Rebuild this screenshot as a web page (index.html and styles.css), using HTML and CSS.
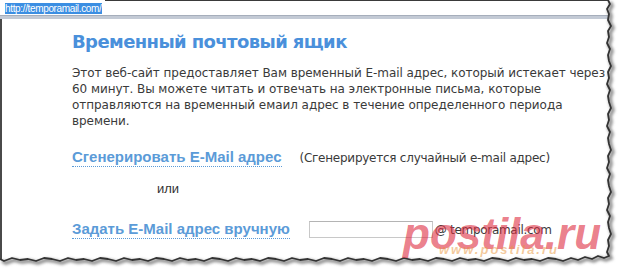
FILE: index.html
```html
<!DOCTYPE html>
<html lang="ru">
<head>
<meta charset="utf-8">
<title>temporamail.com</title>
<link rel="stylesheet" href="styles.css">
</head>
<body>
<div class="shot">
  <div class="urlbar"><span class="sel">http://temporamail.com/</span><span class="url-rest"></span></div>
  <div class="bar"></div>
  <div class="page">
    <h1 class="title">Временный почтовый ящик</h1>
    <p class="intro">Этот веб-сайт предоставляет Вам временный E-mail адрес, который истекает через<br>60 минут. Вы можете читать и отвечать на электронные письма, которые<br>отправляются на временный емаил адрес в течение определенного периода<br>времени.</p>
    <div class="row row-gen"><a class="act">Сгенерировать E-Mail адрес</a><span class="hint">(Сгенерируется случайный e-mail адрес)</span></div>
    <div class="or">или</div>
    <div class="row row-set"><a class="act">Задать E-Mail адрес вручную</a><span class="field"></span><span class="domain">@ temporamail.com</span></div>
  </div>
</div>
<svg class="torn" viewBox="0 0 620 273" width="620" height="273">
  <defs>
    <filter id="blur" x="-10%" y="-10%" width="120%" height="120%"><feGaussianBlur stdDeviation="1.4"/></filter>
  </defs>
  <path fill="#fff" d="M608,0 L610,4 L607,9 L609,14 L608,20 L611,26 L608,31 L609,37 L607,43 L610,49 L608,55 L609,61 L611,66 L608,72 L609,78 L607,84 L610,90 L608,96 L609,102 L611,108 L608,114 L609,120 L607,126 L610,132 L608,138 L609,144 L611,150 L608,156 L609,162 L607,168 L610,174 L608,180 L609,186 L611,192 L608,198 L609,204 L607,210 L610,216 L608,222 L609,228 L611,234 L608,240 L609,246 L607,252 L609,256 L604,258 L598,256 L592,259 L585,257 L578,260 L571,258 L563,261 L556,259 L548,258 L540,261 L532,259 L524,260 L516,258 L508,261 L500,259 L492,258 L484,261 L476,259 L468,260 L460,258 L452,261 L444,259 L436,258 L428,261 L420,259 L412,260 L404,258 L396,261 L388,259 L380,258 L372,261 L364,259 L356,260 L348,258 L340,261 L332,259 L324,258 L316,261 L308,259 L300,260 L292,258 L284,261 L276,259 L268,258 L260,261 L252,259 L244,260 L236,258 L228,261 L220,259 L212,258 L204,261 L196,259 L188,260 L180,258 L172,261 L164,259 L156,258 L148,261 L140,259 L132,260 L124,258 L116,261 L108,259 L100,258 L92,261 L84,259 L76,260 L68,258 L60,261 L52,259 L44,258 L36,261 L28,259 L20,260 L12,258 L4,261 L0,259 L0,273 L620,273 L620,0 Z"/>
  <path class="edge-shadow" filter="url(#blur)" transform="translate(2,2)" d="M608,0 L610,4 L607,9 L609,14 L608,20 L611,26 L608,31 L609,37 L607,43 L610,49 L608,55 L609,61 L611,66 L608,72 L609,78 L607,84 L610,90 L608,96 L609,102 L611,108 L608,114 L609,120 L607,126 L610,132 L608,138 L609,144 L611,150 L608,156 L609,162 L607,168 L610,174 L608,180 L609,186 L611,192 L608,198 L609,204 L607,210 L610,216 L608,222 L609,228 L611,234 L608,240 L609,246 L607,252 L609,256 L604,258 L598,256 L592,259 L585,257 L578,260 L571,258 L563,261 L556,259 L548,258 L540,261 L532,259 L524,260 L516,258 L508,261 L500,259 L492,258 L484,261 L476,259 L468,260 L460,258 L452,261 L444,259 L436,258 L428,261 L420,259 L412,260 L404,258 L396,261 L388,259 L380,258 L372,261 L364,259 L356,260 L348,258 L340,261 L332,259 L324,258 L316,261 L308,259 L300,260 L292,258 L284,261 L276,259 L268,258 L260,261 L252,259 L244,260 L236,258 L228,261 L220,259 L212,258 L204,261 L196,259 L188,260 L180,258 L172,261 L164,259 L156,258 L148,261 L140,259 L132,260 L124,258 L116,261 L108,259 L100,258 L92,261 L84,259 L76,260 L68,258 L60,261 L52,259 L44,258 L36,261 L28,259 L20,260 L12,258 L4,261 L0,259"/>
  <path class="edge" d="M608,0 L610,4 L607,9 L609,14 L608,20 L611,26 L608,31 L609,37 L607,43 L610,49 L608,55 L609,61 L611,66 L608,72 L609,78 L607,84 L610,90 L608,96 L609,102 L611,108 L608,114 L609,120 L607,126 L610,132 L608,138 L609,144 L611,150 L608,156 L609,162 L607,168 L610,174 L608,180 L609,186 L611,192 L608,198 L609,204 L607,210 L610,216 L608,222 L609,228 L611,234 L608,240 L609,246 L607,252 L609,256 L604,258 L598,256 L592,259 L585,257 L578,260 L571,258 L563,261 L556,259 L548,258 L540,261 L532,259 L524,260 L516,258 L508,261 L500,259 L492,258 L484,261 L476,259 L468,260 L460,258 L452,261 L444,259 L436,258 L428,261 L420,259 L412,260 L404,258 L396,261 L388,259 L380,258 L372,261 L364,259 L356,260 L348,258 L340,261 L332,259 L324,258 L316,261 L308,259 L300,260 L292,258 L284,261 L276,259 L268,258 L260,261 L252,259 L244,260 L236,258 L228,261 L220,259 L212,258 L204,261 L196,259 L188,260 L180,258 L172,261 L164,259 L156,258 L148,261 L140,259 L132,260 L124,258 L116,261 L108,259 L100,258 L92,261 L84,259 L76,260 L68,258 L60,261 L52,259 L44,258 L36,261 L28,259 L20,260 L12,258 L4,261 L0,259"/>
</svg>
<div class="wm"><span class="wm-sub">www.postila.ru</span><span class="wm-main">postila.ru</span></div>
</body>
</html>
```
FILE: styles.css
```css
html, body {
  margin: 0;
  padding: 0;
  background: #fff;
}
body {
  width: 620px;
  height: 273px;
  overflow: hidden;
  position: relative;
  font-family: "DejaVu Sans", Verdana, sans-serif;
  color: #3a3a3a;
}
.shot {
  display: flex;
  flex-direction: column;
  height: 273px;
}
.urlbar {
  display: flex;
  height: 15px;
  padding-left: 5px;
  box-sizing: border-box;
}
.sel {
  margin-top: 3px;
  height: 11px;
  line-height: 11px;
  padding: 0 1px 0 0;
  background: #3b8ee2;
  color: #fff;
  font-family: "Liberation Sans", Arial, sans-serif;
  font-size: 10px;
  letter-spacing: -0.35px;
}
.url-rest {
  flex: 1;
  border-top: 1px solid #3a3a3a;
  margin-left: 3px;
}
.bar {
  height: 3px;
  border-top: 1px solid #a6aebb;
  background: #c3cad5;
}
.page {
  flex: 1;
  border-left: 2px solid #4a4a4a;
  padding-left: 70px;
}
.title {
  margin: 12px 0 0;
  font-size: 18px;
  line-height: 22px;
  letter-spacing: -0.6px;
  font-weight: bold;
  color: #4a90db;
}
.intro {
  margin: 12px 0 0;
  font-size: 12px;
  line-height: 16px;
  letter-spacing: -0.05px;
  white-space: nowrap;
}
.row {
  display: flex;
}
.row-gen {
  align-items: baseline;
  margin-top: 19px;
}
.row-set {
  align-items: center;
  margin-top: 23px;
}
.act {
  font-family: "Liberation Sans", Arial, sans-serif;
  font-weight: bold;
  font-size: 15px;
  line-height: 18px;
  color: #5b9bd8;
  border-bottom: 1px dotted #5b9bd8;
}
.hint {
  margin-left: 18px;
  font-size: 12px;
  letter-spacing: -0.25px;
}
.or {
  margin-top: 14px;
  padding-left: 85px;
  font-family: "Liberation Sans", Arial, sans-serif;
  font-size: 13px;
  line-height: 16px;
  color: #333;
}
.field {
  margin-left: 19px;
  width: 124px;
  height: 17px;
  box-sizing: border-box;
  border: 1px solid #c8c8c8;
  border-top-color: #b4b4b4;
}
.domain {
  margin-left: 2px;
  font-size: 12px;
  letter-spacing: -0.3px;
}
.torn {
  position: absolute;
  left: 0;
  top: 0;
}
.edge-shadow {
  fill: none;
  stroke: #8c8c8c;
  stroke-width: 3.5;
}
.edge {
  fill: none;
  stroke: #333;
  stroke-width: 1.8;
  stroke-linejoin: round;
}
.wm {
  position: absolute;
  left: 403px;
  top: 212px;
  pointer-events: none;
}
.wm-main {
  display: block;
  font-family: "Liberation Sans", Arial, sans-serif;
  font-weight: bold;
  font-style: italic;
  font-size: 44px;
  line-height: 44px;
  color: rgba(222, 45, 65, 0.62);
}
.wm-sub {
  position: absolute;
  left: 36px;
  top: 30px;
  font-family: "Liberation Sans", Arial, sans-serif;
  font-weight: bold;
  font-style: italic;
  font-size: 13px;
  letter-spacing: 2px;
  color: rgba(232, 150, 60, 0.5);
  white-space: nowrap;
}
```
